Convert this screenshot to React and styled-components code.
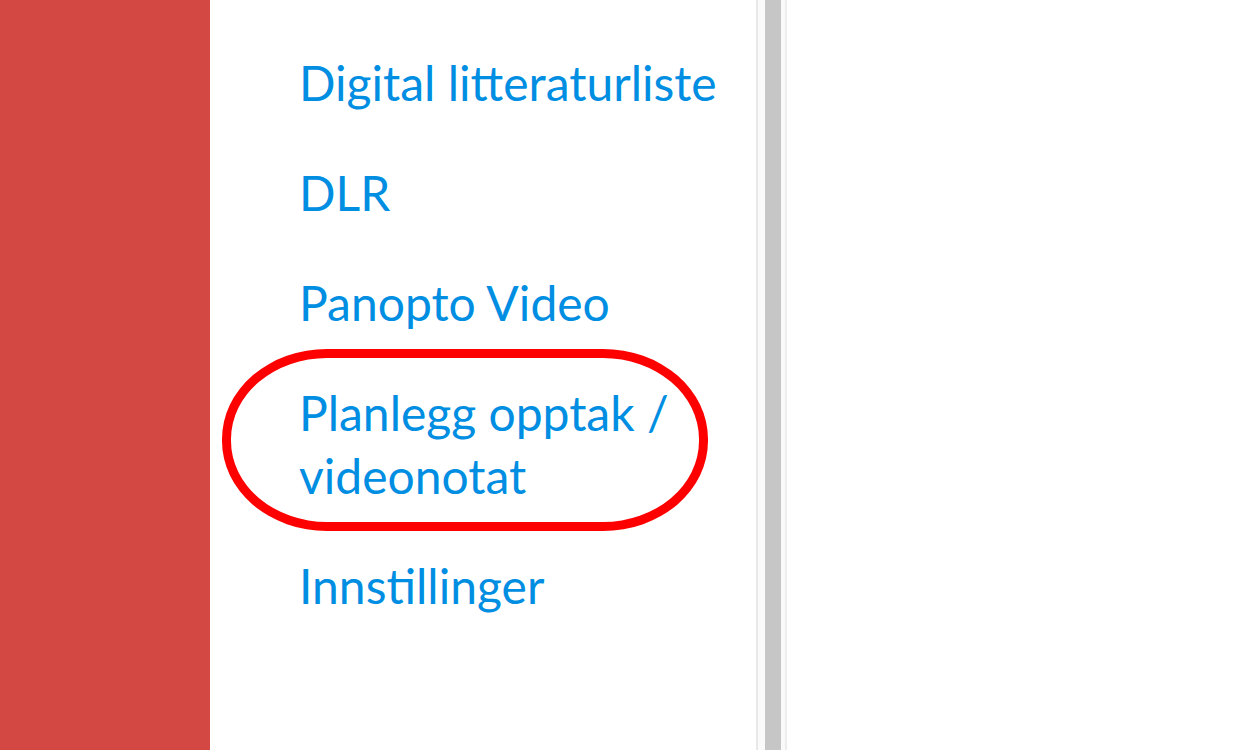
import React from 'react';
import styled, { createGlobalStyle } from 'styled-components';

const GlobalStyle = createGlobalStyle`
  html, body {
    margin: 0;
    padding: 0;
    height: 100%;
    background: #fff;
  }
  #root {
    height: 100%;
  }
`;

const Page = styled.div`
  display: flex;
  height: 750px;
  overflow: hidden;
  font-family: Lato, "Noto Sans", sans-serif;
`;

const Sidebar = styled.div`
  width: 210px;
  flex-shrink: 0;
  background: #d34843;
`;

const Nav = styled.nav`
  position: relative;
  width: 546px;
  flex-shrink: 0;
  padding: 51px 0 0 89px;
  box-sizing: border-box;
  display: flex;
  flex-direction: column;
  gap: 47px;
`;

const NavLink = styled.a`
  display: block;
  font-size: 48px;
  line-height: 63px;
  color: #008ee2;
  text-decoration: none;
  max-width: 420px;
`;

const Highlight = styled.div`
  position: absolute;
  left: 12px;
  top: 349px;
  width: 486px;
  height: 182px;
  box-sizing: border-box;
  border: 9px solid #ff0000;
  border-radius: 105px / 90px;
  pointer-events: none;
`;

const Divider = styled.div`
  display: flex;
  width: 31px;
  flex-shrink: 0;
  border-left: 2px solid #e8e8e8;
  border-right: 2px solid #ededed;
  background: #fafafa;
  justify-content: center;
  padding: 0 4px 0 6px;
  box-sizing: border-box;
`;

const Grip = styled.div`
  width: 16px;
  background: #c6c6c6;
`;

const Main = styled.main`
  flex: 1;
  background: #fff;
`;

const items = [
  'Digital litteraturliste',
  'DLR',
  'Panopto Video',
  'Planlegg opptak / videonotat',
  'Innstillinger',
];

export default function App() {
  return (
    <>
      <GlobalStyle />
      <Page>
        <Sidebar />
        <Nav>
          {items.map((label) => (
            <NavLink key={label} href="#">{label}</NavLink>
          ))}
          <Highlight />
        </Nav>
        <Divider>
          <Grip />
        </Divider>
        <Main />
      </Page>
    </>
  );
}
